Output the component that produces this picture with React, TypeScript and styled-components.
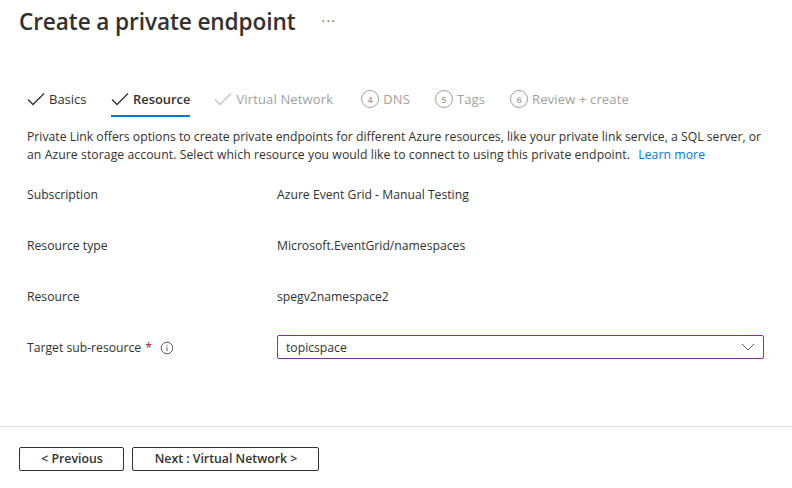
import styled, { createGlobalStyle } from 'styled-components';

const GlobalStyle = createGlobalStyle`
  html, body {
    margin: 0;
    padding: 0;
    background: #ffffff;
  }
  body {
    font-family: "Open Sans", "Noto Sans", sans-serif;
    font-size: 12.2px;
    color: #323130;
  }
`;

const Page = styled.div`
  width: 792px;
  height: 488px;
  overflow: hidden;
  display: flex;
  flex-direction: column;
`;

const Header = styled.header`
  display: flex;
  align-items: center;
  gap: 26px;
  height: 42px;
  padding-left: 19px;
`;

const Title = styled.h1`
  margin: 0;
  font-size: 22.6px;
  font-weight: 600;
  color: #323130;
  letter-spacing: -0.1px;
`;

const More = styled.span`
  font-size: 13px;
  color: #605e5c;
  letter-spacing: 1.5px;
  line-height: 1;
  margin-top: -8px;
`;

const Tabs = styled.nav`
  display: flex;
  margin: 41px 0 0 27px;
  height: 34px;
`;

const Tab = styled.div<{ $active?: boolean; $off?: boolean; $gap: number }>`
  display: flex;
  align-items: center;
  gap: 4px;
  height: 32px;
  margin-right: ${(p) => p.$gap}px;
  border-bottom: 2px solid ${(p) => (p.$active ? '#0078d4' : 'transparent')};
  color: ${(p) => (p.$off ? '#a19f9d' : '#323130')};
  font-size: ${(p) => (p.$active ? 12.9 : 13)}px;
  font-weight: ${(p) => (p.$active ? 600 : 400)};
  letter-spacing: ${(p) => (p.$off ? 0.14 : 0)}px;
`;

const StepNumber = styled.span`
  width: 18px;
  height: 18px;
  box-sizing: border-box;
  border: 1px solid #a19f9d;
  border-radius: 50%;
  display: flex;
  align-items: center;
  justify-content: center;
  font-size: 9px;
  font-weight: 600;
  color: #a19f9d;
`;

const Intro = styled.p`
  margin: 11px 28px 0 27px;
  line-height: 18px;
`;

const IntroLine = styled.span<{ $spacing: number }>`
  display: block;
  white-space: nowrap;
  letter-spacing: ${(p) => p.$spacing}px;
`;

const LearnMore = styled.a`
  color: #0078d4;
  margin-left: 5px;
`;

const Form = styled.div`
  display: flex;
  flex-direction: column;
  margin: 18px 28px 0 27px;
`;

const Row = styled.div`
  display: grid;
  grid-template-columns: 250px 1fr;
  align-items: center;
  height: 24px;
  margin-bottom: 27px;
`;

const Label = styled.div`
  display: flex;
  align-items: center;
`;

const Required = styled.span`
  color: #a4262c;
  margin-left: 4px;
`;

const Info = styled.svg`
  width: 14px;
  height: 14px;
  margin: 1px 0 0 8px;
`;

const Select = styled.div`
  height: 24px;
  box-sizing: border-box;
  border: 1px solid #8a2da5;
  border-radius: 2px;
  display: flex;
  align-items: center;
  justify-content: space-between;
  padding: 0 8px;
`;

const Footer = styled.footer`
  margin-top: auto;
  height: 62px;
  box-sizing: border-box;
  border-top: 1px solid #e1dfdd;
  display: flex;
  gap: 8px;
  padding: 20px 0 0 19px;
`;

const Button = styled.button<{ $width: number }>`
  width: ${(p) => p.$width}px;
  height: 24px;
  box-sizing: border-box;
  background: #ffffff;
  border: 1px solid #323130;
  border-radius: 2px;
  color: #323130;
  font-family: inherit;
  font-size: 12.3px;
  font-weight: 600;
  padding: 0 0 2px 1px;
`;

const Check = ({ color }: { color: string }) => (
  <svg width="18" height="14" viewBox="0 0 18 14" fill="none">
    <path d="M1 7.5L6 12.5L17 1.5" stroke={color} strokeWidth="1.3" />
  </svg>
);

export default function App() {
  return (
    <Page>
      <GlobalStyle />
      <Header>
        <Title>Create a private endpoint</Title>
        <More>...</More>
      </Header>
      <Tabs>
        <Tab $gap={24.5}>
          <Check color="#323130" />
          Basics
        </Tab>
        <Tab $active $gap={24}>
          <Check color="#323130" />
          Resource
        </Tab>
        <Tab $off $gap={28}>
          <Check color="#c8c6c4" />
          Virtual Network
        </Tab>
        <Tab $off $gap={25}>
          <StepNumber>4</StepNumber>
          DNS
        </Tab>
        <Tab $off $gap={25}>
          <StepNumber>5</StepNumber>
          Tags
        </Tab>
        <Tab $off $gap={0}>
          <StepNumber>6</StepNumber>
          Review + create
        </Tab>
      </Tabs>
      <Intro>
        <IntroLine $spacing={0.02}>
          Private Link offers options to create private endpoints for different Azure resources, like your private link
          service, a SQL server, or
        </IntroLine>
        <IntroLine $spacing={0.08}>
          an Azure storage account. Select which resource you would like to connect to using this private endpoint.{' '}
          <LearnMore>Learn more</LearnMore>
        </IntroLine>
      </Intro>
      <Form>
        <Row>
          <Label>Subscription</Label>
          <div>Azure Event Grid - Manual Testing</div>
        </Row>
        <Row>
          <Label>Resource type</Label>
          <div>Microsoft.EventGrid/namespaces</div>
        </Row>
        <Row>
          <Label>Resource</Label>
          <div>spegv2namespace2</div>
        </Row>
        <Row>
          <Label>
            Target sub-resource<Required>*</Required>
            <Info viewBox="0 0 14 14" fill="none">
              <circle cx="7" cy="7" r="5.8" stroke="#605e5c" />
              <path d="M7 6.2V10.2M7 3.9V5" stroke="#605e5c" />
            </Info>
          </Label>
          <Select>
            topicspace
            <svg width="14" height="8" viewBox="0 0 14 8" fill="none">
              <path d="M1 1L7 7L13 1" stroke="#605e5c" />
            </svg>
          </Select>
        </Row>
      </Form>
      <Footer>
        <Button $width={105}>&lt; Previous</Button>
        <Button $width={187}>Next : Virtual Network &gt;</Button>
      </Footer>
    </Page>
  );
}
